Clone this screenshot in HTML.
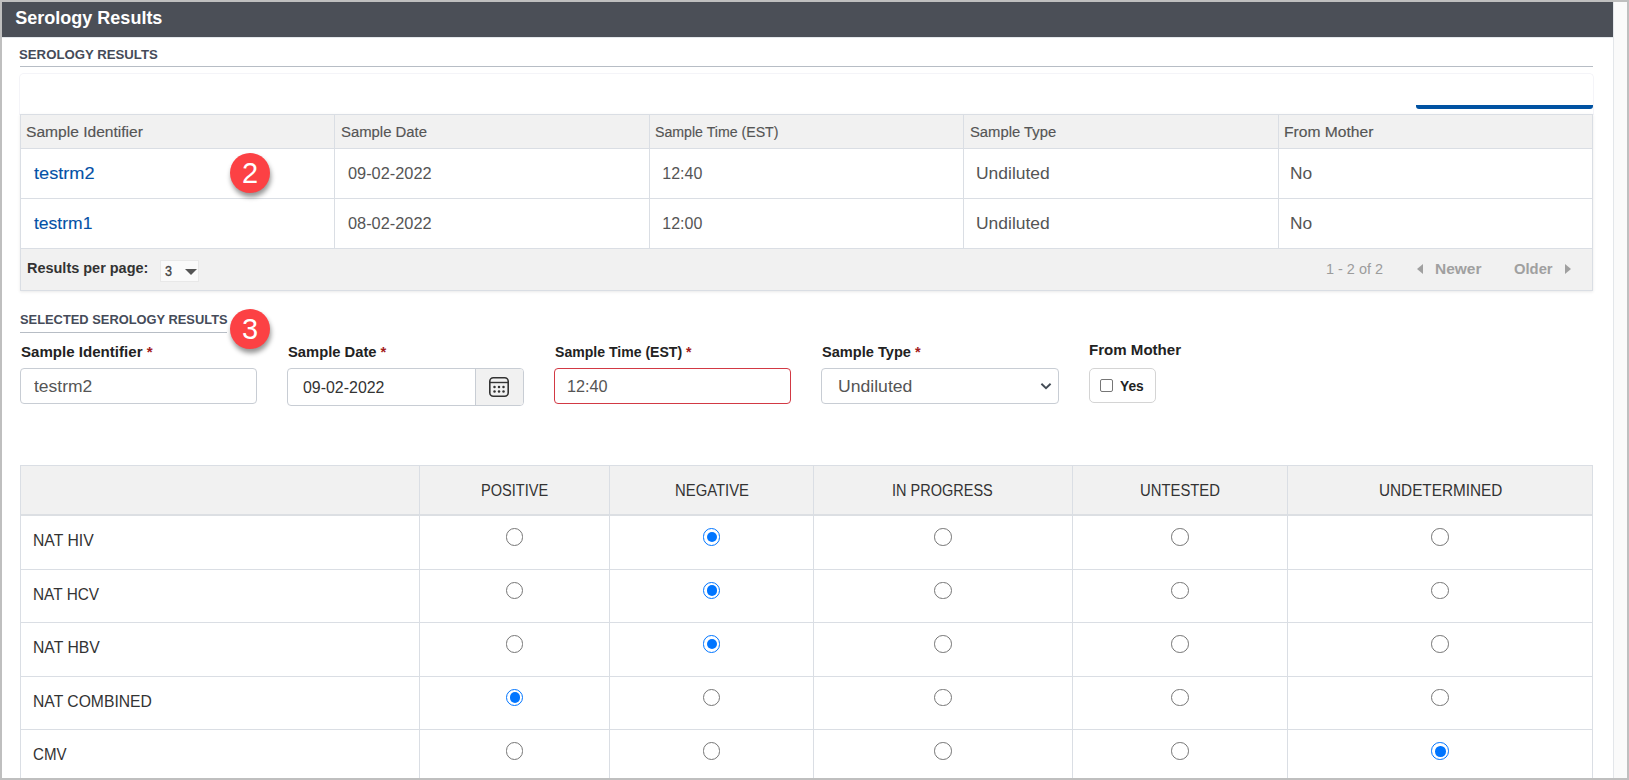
<!DOCTYPE html>
<html><head><meta charset="utf-8">
<style>
*{box-sizing:border-box;margin:0;padding:0}
html,body{width:1629px;height:780px;overflow:hidden;background:#fff}
body{font-family:"Liberation Sans",sans-serif;position:relative}
.a{position:absolute;white-space:nowrap}
.t{position:absolute;white-space:nowrap;line-height:20px}
.req{color:#a31c1c}
.bl{background:#dadee4}
.th{background:#f1f1f1}
.inp{border:1px solid #c8cdd4;border-radius:4px;background:#fff}
.rad{width:17.6px;height:17.6px;border:1.3px solid #767676;border-radius:50%;background:#fff}
.radc{width:17.6px;height:17.6px;border:1.6px solid #0075ff;border-radius:50%;background:#fff}
.radc:after{content:"";position:absolute;left:2.95px;top:2.95px;width:10.5px;height:10.5px;border-radius:50%;background:#0075ff}
.badge{width:40px;height:40px;border-radius:50%;background:#fc4144;color:#fff;font-size:29px;line-height:40px;text-align:center;box-shadow:1px 4px 5px rgba(0,0,0,0.42)}
</style></head><body>
<div class="a" style="left:2px;top:2px;width:1612px;height:35px;background:#4b4f57"></div>
<div class="a" style="left:2px;top:37px;width:1611px;height:1px;background:#e4e8ec"></div>
<div class="a" style="left:1613px;top:2px;width:14px;height:776px;background:#fafafa;border-left:1px solid #e3e6ea"></div>
<div class="a" style="left:20px;top:66px;width:1573px;height:1px;background:#b7bdc5"></div>
<div class="a" style="left:19px;top:73px;width:1575px;height:42px;background:#fff;border:1px solid #f4f4f8;border-bottom:none;border-radius:5px 5px 0 0"></div>
<div class="a" style="left:1416px;top:105px;width:177px;height:4px;background:#0052a2;border-radius:0 0 3px 3px"></div>
<div class="a" style="left:20px;top:114px;width:1573px;height:177px;border:1px solid #dadee4;box-shadow:0 1px 3px rgba(0,0,0,0.09)"></div>
<div class="a th" style="left:21px;top:115px;width:1571px;height:33px"></div>
<div class="a bl" style="left:21px;top:148px;width:1571px;height:1px"></div>
<div class="a bl" style="left:21px;top:198px;width:1571px;height:1px"></div>
<div class="a bl" style="left:21px;top:248px;width:1571px;height:1px"></div>
<div class="a th" style="left:21px;top:249px;width:1571px;height:41px"></div>
<div class="a bl" style="left:334px;top:115px;width:1px;height:133px"></div>
<div class="a bl" style="left:649px;top:115px;width:1px;height:133px"></div>
<div class="a bl" style="left:963px;top:115px;width:1px;height:133px"></div>
<div class="a bl" style="left:1278px;top:115px;width:1px;height:133px"></div>
<div class="a" style="left:160px;top:260px;width:39px;height:22px;background:#fafafa;border:1px solid #e8e8e8"></div>
<div class="a" style="left:185px;top:269px;width:0;height:0;border-left:6px solid transparent;border-right:6px solid transparent;border-top:6px solid #555"></div>
<div class="a" style="left:1417px;top:263.5px;width:0;height:0;border-top:5.5px solid transparent;border-bottom:5.5px solid transparent;border-right:6.5px solid #a0a0a0"></div>
<div class="a" style="left:1565px;top:263.5px;width:0;height:0;border-top:5.5px solid transparent;border-bottom:5.5px solid transparent;border-left:6.5px solid #a0a0a0"></div>
<div class="a" style="left:20px;top:332px;width:207px;height:1px;background:#b7bdc5"></div>
<div class="a inp" style="left:20px;top:368px;width:237px;height:36px"></div>
<div class="a inp" style="left:287px;top:368px;width:237px;height:38px;overflow:hidden"><div class="a" style="left:187px;top:0;width:48px;height:36px;background:#f1f1f1;border-left:1px solid #c8cdd4"></div></div>
<svg class="a" style="left:488px;top:376px" width="22" height="22" viewBox="0 0 22 22">
  <rect x="1.8" y="1.8" width="18.4" height="18.4" rx="3.5" fill="none" stroke="#333" stroke-width="1.6"/>
  <line x1="1.8" y1="6.5" x2="20.2" y2="6.5" stroke="#333" stroke-width="1.4"/>
  <circle cx="6.5" cy="10.9" r="1.25" fill="#333"/><circle cx="11" cy="10.9" r="1.25" fill="#333"/><circle cx="15.5" cy="10.9" r="1.25" fill="#333"/>
  <circle cx="6.5" cy="15.5" r="1.25" fill="#333"/><circle cx="11" cy="15.5" r="1.25" fill="#333"/><circle cx="15.5" cy="15.5" r="1.25" fill="#333"/>
</svg>
<div class="a inp" style="left:554px;top:368px;width:237px;height:36px;border-color:#d23944"></div>
<div class="a inp" style="left:821px;top:368px;width:238px;height:36px"></div>
<svg class="a" style="left:1039px;top:380px" width="14" height="12" viewBox="0 0 14 12"><polyline points="2.4,3.8 7,8.2 11.6,3.8" fill="none" stroke="#434b55" stroke-width="1.9"/></svg>
<div class="a" style="left:1089px;top:368px;width:67px;height:35px;border:1px solid #d4d4d4;border-radius:5px"></div>
<div class="a" style="left:1100px;top:379px;width:13px;height:13px;border:1px solid #767676;border-radius:2px"></div>
<div class="a" style="left:20px;top:465px;width:1573px;height:320px;border:1px solid #dadee4"></div>
<div class="a th" style="left:21px;top:466px;width:1571px;height:48px"></div>
<div class="a" style="left:21px;top:514px;width:1571px;height:2px;background:#dcdfe3"></div>
<div class="a bl" style="left:21px;top:569px;width:1571px;height:1px"></div>
<div class="a bl" style="left:21px;top:622px;width:1571px;height:1px"></div>
<div class="a bl" style="left:21px;top:676px;width:1571px;height:1px"></div>
<div class="a bl" style="left:21px;top:729px;width:1571px;height:1px"></div>
<div class="a bl" style="left:419px;top:466px;width:1px;height:314px"></div>
<div class="a bl" style="left:609px;top:466px;width:1px;height:314px"></div>
<div class="a bl" style="left:813px;top:466px;width:1px;height:314px"></div>
<div class="a bl" style="left:1072px;top:466px;width:1px;height:314px"></div>
<div class="a bl" style="left:1287px;top:466px;width:1px;height:314px"></div>
<div class="a rad" style="left:505.9px;top:528.0px"></div>
<div class="a radc" style="left:702.8px;top:528.0px"></div>
<div class="a rad" style="left:934.3px;top:528.0px"></div>
<div class="a rad" style="left:1171.3px;top:528.0px"></div>
<div class="a rad" style="left:1431.3px;top:528.0px"></div>
<div class="a rad" style="left:505.9px;top:581.5px"></div>
<div class="a radc" style="left:702.8px;top:581.5px"></div>
<div class="a rad" style="left:934.3px;top:581.5px"></div>
<div class="a rad" style="left:1171.3px;top:581.5px"></div>
<div class="a rad" style="left:1431.3px;top:581.5px"></div>
<div class="a rad" style="left:505.9px;top:635.0px"></div>
<div class="a radc" style="left:702.8px;top:635.0px"></div>
<div class="a rad" style="left:934.3px;top:635.0px"></div>
<div class="a rad" style="left:1171.3px;top:635.0px"></div>
<div class="a rad" style="left:1431.3px;top:635.0px"></div>
<div class="a radc" style="left:505.9px;top:688.5px"></div>
<div class="a rad" style="left:702.8px;top:688.5px"></div>
<div class="a rad" style="left:934.3px;top:688.5px"></div>
<div class="a rad" style="left:1171.3px;top:688.5px"></div>
<div class="a rad" style="left:1431.3px;top:688.5px"></div>
<div class="a rad" style="left:505.9px;top:742.1px"></div>
<div class="a rad" style="left:702.8px;top:742.1px"></div>
<div class="a rad" style="left:934.3px;top:742.1px"></div>
<div class="a rad" style="left:1171.3px;top:742.1px"></div>
<div class="a radc" style="left:1431.3px;top:742.1px"></div>
<div class="t" style="left:15.35px;top:7.6px;font-weight:bold;font-size:18px;color:#fff">Serology Results</div>
<div class="t" style="left:19.24px;top:44.8px;font-weight:bold;font-size:13px;color:#454b59;transform:scaleX(1.0148);transform-origin:0 0">SEROLOGY RESULTS</div>
<div class="t" style="left:26.24px;top:121.6px;font-weight:normal;font-size:14px;color:#555;transform:scaleX(1.1125);transform-origin:0 0;-webkit-text-stroke:0.15px #555">Sample Identifier</div>
<div class="t" style="left:340.89px;top:121.6px;font-weight:normal;font-size:14px;color:#555;transform:scaleX(1.0625);transform-origin:0 0;-webkit-text-stroke:0.15px #555">Sample Date</div>
<div class="t" style="left:655.44px;top:121.6px;font-weight:normal;font-size:14px;color:#555;transform:scaleX(1.0107);transform-origin:0 0;-webkit-text-stroke:0.15px #555">Sample Time (EST)</div>
<div class="t" style="left:969.99px;top:121.6px;font-weight:normal;font-size:14px;color:#555;transform:scaleX(1.0575);transform-origin:0 0;-webkit-text-stroke:0.15px #555">Sample Type</div>
<div class="t" style="left:1284.03px;top:121.6px;font-weight:normal;font-size:14px;color:#555;transform:scaleX(1.1165);transform-origin:0 0;-webkit-text-stroke:0.15px #555">From Mother</div>
<div class="t" style="left:33.75px;top:164.0px;font-weight:normal;font-size:16px;color:#0451a6;transform:scaleX(1.1358);transform-origin:0 0;-webkit-text-stroke:0.1px #0451a6">testrm2</div>
<div class="t" style="left:348.15px;top:164.0px;font-weight:normal;font-size:16px;color:#555;transform:scaleX(1.021);transform-origin:0 0">09-02-2022</div>
<div class="t" style="left:662.25px;top:164.0px;font-weight:normal;font-size:16px;color:#555">12:40</div>
<div class="t" style="left:976.36px;top:164.0px;font-weight:normal;font-size:16px;color:#555;transform:scaleX(1.0909);transform-origin:0 0">Undiluted</div>
<div class="t" style="left:1290.17px;top:164.0px;font-weight:normal;font-size:16px;color:#555;transform:scaleX(1.0842);transform-origin:0 0">No</div>
<div class="t" style="left:33.85px;top:214.0px;font-weight:normal;font-size:16px;color:#0451a6;transform:scaleX(1.0943);transform-origin:0 0;-webkit-text-stroke:0.1px #0451a6">testrm1</div>
<div class="t" style="left:348.15px;top:214.0px;font-weight:normal;font-size:16px;color:#555;transform:scaleX(1.021);transform-origin:0 0">08-02-2022</div>
<div class="t" style="left:662.25px;top:214.0px;font-weight:normal;font-size:16px;color:#555">12:00</div>
<div class="t" style="left:976.36px;top:214.0px;font-weight:normal;font-size:16px;color:#555;transform:scaleX(1.0909);transform-origin:0 0">Undiluted</div>
<div class="t" style="left:1290.17px;top:214.0px;font-weight:normal;font-size:16px;color:#555;transform:scaleX(1.0842);transform-origin:0 0">No</div>
<div class="t" style="left:26.52px;top:257.9px;font-weight:bold;font-size:14px;color:#333;transform:scaleX(1.033);transform-origin:0 0">Results per page:</div>
<div class="t" style="left:165.05px;top:260.8px;font-weight:normal;font-size:14px;color:#444;transform:scaleX(0.9);transform-origin:0 0;-webkit-text-stroke:0.3px #444">3</div>
<div class="t" style="left:1325.62px;top:259.0px;font-weight:normal;font-size:14px;color:#9c9c9c;transform:scaleX(1.0315);transform-origin:0 0">1 - 2 of 2</div>
<div class="t" style="left:1435.15px;top:259.0px;font-weight:bold;font-size:14px;color:#a0a0a0;transform:scaleX(1.1049);transform-origin:0 0">Newer</div>
<div class="t" style="left:1514.05px;top:259.0px;font-weight:bold;font-size:14px;color:#a0a0a0;transform:scaleX(1.0556);transform-origin:0 0">Older</div>
<div class="t" style="left:19.86px;top:309.8px;font-weight:bold;font-size:13px;color:#454b59;transform:scaleX(0.9899);transform-origin:0 0">SELECTED SEROLOGY RESULTS</div>
<div class="t" style="left:20.85px;top:341.7px;font-weight:bold;font-size:14px;color:#222;transform:scaleX(1.077);transform-origin:0 0">Sample Identifier <span class="req">*</span></div>
<div class="t" style="left:288.25px;top:341.7px;font-weight:bold;font-size:14px;color:#222;transform:scaleX(1.0532);transform-origin:0 0">Sample Date <span class="req">*</span></div>
<div class="t" style="left:555.15px;top:341.9px;font-weight:bold;font-size:14px;color:#222;transform:scaleX(1.0044);transform-origin:0 0">Sample Time (EST) <span class="req">*</span></div>
<div class="t" style="left:821.95px;top:341.7px;font-weight:bold;font-size:14px;color:#222;transform:scaleX(1.0421);transform-origin:0 0">Sample Type <span class="req">*</span></div>
<div class="t" style="left:1088.77px;top:340.2px;font-weight:bold;font-size:14px;color:#222;transform:scaleX(1.0762);transform-origin:0 0">From Mother</div>
<div class="t" style="left:33.65px;top:377.2px;font-weight:normal;font-size:16px;color:#555;transform:scaleX(1.0925);transform-origin:0 0">testrm2</div>
<div class="t" style="left:303.05px;top:377.7px;font-weight:normal;font-size:16px;color:#333;transform:scaleX(0.9951);transform-origin:0 0">09-02-2022</div>
<div class="t" style="left:567.33px;top:376.7px;font-weight:normal;font-size:16px;color:#555;transform:scaleX(1.0154);transform-origin:0 0">12:40</div>
<div class="t" style="left:838.15px;top:376.7px;font-weight:normal;font-size:16px;color:#555;transform:scaleX(1.1);transform-origin:0 0">Undiluted</div>
<div class="t" style="left:1119.65px;top:375.8px;font-weight:bold;font-size:14px;color:#222;transform:scaleX(0.9833);transform-origin:0 0">Yes</div>
<div class="t" style="left:480.94px;top:480.9px;font-weight:normal;font-size:16px;color:#333;transform:scaleX(0.9097);transform-origin:0 0">POSITIVE</div>
<div class="t" style="left:675.02px;top:480.9px;font-weight:normal;font-size:16px;color:#333;transform:scaleX(0.9282);transform-origin:0 0">NEGATIVE</div>
<div class="t" style="left:892.34px;top:480.9px;font-weight:normal;font-size:16px;color:#333;transform:scaleX(0.9064);transform-origin:0 0">IN PROGRESS</div>
<div class="t" style="left:1139.82px;top:480.9px;font-weight:normal;font-size:16px;color:#333;transform:scaleX(0.9271);transform-origin:0 0">UNTESTED</div>
<div class="t" style="left:1378.79px;top:480.9px;font-weight:normal;font-size:16px;color:#333;transform:scaleX(0.9567);transform-origin:0 0">UNDETERMINED</div>
<div class="t" style="left:33.07px;top:530.8px;font-weight:normal;font-size:16px;color:#333;transform:scaleX(0.9836);transform-origin:0 0">NAT HIV</div>
<div class="t" style="left:33.29px;top:585.0px;font-weight:normal;font-size:16px;color:#333;transform:scaleX(0.9618);transform-origin:0 0">NAT HCV</div>
<div class="t" style="left:33.27px;top:638.0px;font-weight:normal;font-size:16px;color:#333;transform:scaleX(0.9836);transform-origin:0 0">NAT HBV</div>
<div class="t" style="left:33.27px;top:691.8px;font-weight:normal;font-size:16px;color:#333;transform:scaleX(0.9808);transform-origin:0 0">NAT COMBINED</div>
<div class="t" style="left:33.31px;top:744.9px;font-weight:normal;font-size:16px;color:#333;transform:scaleX(0.9429);transform-origin:0 0">CMV</div>
<div class="a badge" style="left:230px;top:153px">2</div>
<div class="a badge" style="left:230px;top:309px">3</div>
<div class="a" style="left:0;top:0;width:1629px;height:780px;border:2px solid #bfbfbf"></div>
</body></html>
